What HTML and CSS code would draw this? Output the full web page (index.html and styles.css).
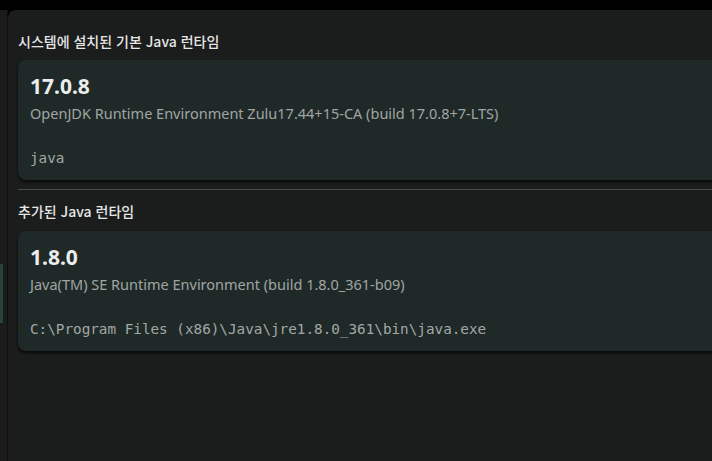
FILE: index.html
```html
<!DOCTYPE html>
<html lang="ko">
<head>
<meta charset="utf-8">
<link rel="stylesheet" href="styles.css">
</head>
<body>
<div class="app">
  <aside class="rail">
    <div class="rail-indicator"></div>
  </aside>
  <main class="panel">
    <h2 class="section-title">시스템에 설치된 기본 Java 런타임</h2>
    <div class="card">
      <div class="ver">17.0.8</div>
      <div class="desc">OpenJDK Runtime Environment Zulu17.44+15-CA (build 17.0.8+7-LTS)</div>
      <div class="path">java</div>
    </div>
    <div class="divider"></div>
    <h2 class="section-title second">추가된 Java 런타임</h2>
    <div class="card">
      <div class="ver">1.8.0</div>
      <div class="desc">Java(TM) SE Runtime Environment (build 1.8.0_361-b09)</div>
      <div class="path">C:\Program Files (x86)\Java\jre1.8.0_361\bin\java.exe</div>
    </div>
  </main>
</div>
</body>
</html>
```
FILE: styles.css
```css
html, body {
  margin: 0;
  padding: 0;
  background: #000;
  width: 712px;
  height: 461px;
  overflow: hidden;
}
body {
  font-family: "Noto Sans", "Noto Sans CJK KR", sans-serif;
}
.app {
  display: flex;
  height: 461px;
  padding-top: 10px;
  box-sizing: border-box;
}
.rail {
  width: 7px;
  flex: none;
  background: #1b1b1b;
  border-right: 1px solid #0e0e0e;
  padding-top: 254px;
  box-sizing: content-box;
}
.rail-indicator {
  width: 3px;
  height: 59px;
  background: #27443a;
}
.panel {
  flex: 1;
  min-width: 0;
  overflow: hidden;
  background: #1b1c1c;
  border-top-left-radius: 8px;
  padding: 20px 0 0 10px;
  box-sizing: border-box;
}
.section-title {
  margin: 0;
  font-family: "Noto Sans CJK KR", sans-serif;
  font-size: 14px;
  font-weight: 500;
  line-height: 22px;
  color: #e6e6e6;
  height: 30px;
}
.section-title.second {
  height: 31px;
}
.card {
  background: #1f2a28;
  border-radius: 8px;
  padding: 12px;
  margin-right: -20px;
  box-shadow: 0 2px 3px rgba(0,0,0,0.75);
  display: flex;
  flex-direction: column;
  height: 120px;
  box-sizing: border-box;
}
.ver {
  font-size: 21px;
  font-weight: 700;
  line-height: 28px;
  color: #eceeed;
}
.desc {
  font-size: 14.5px;
  line-height: 26px;
  color: #a0a5a4;
}
.path {
  margin-top: auto;
  font-family: "DejaVu Sans Mono", monospace;
  font-size: 14.3px;
  line-height: 20px;
  color: #a3a7a6;
}
.divider {
  height: 1px;
  background: #474a49;
  margin: 9px -20px 10px 0;
}
```
